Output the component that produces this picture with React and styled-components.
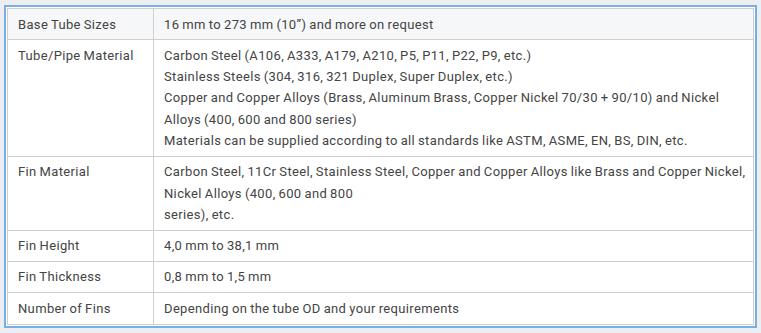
import styled, { createGlobalStyle } from "styled-components";

const rows = [
  {
    label: "Base Tube Sizes",
    lines: ["16 mm to 273 mm (10”) and more on request"],
    shaded: true,
  },
  {
    label: "Tube/Pipe Material",
    lines: [
      "Carbon Steel (A106, A333, A179, A210, P5, P11, P22, P9, etc.)",
      "Stainless Steels (304, 316, 321 Duplex, Super Duplex, etc.)",
      "Copper and Copper Alloys (Brass, Aluminum Brass, Copper Nickel 70/30 + 90/10) and Nickel",
      "Alloys (400, 600 and 800 series)",
      "Materials can be supplied according to all standards like ASTM, ASME, EN, BS, DIN, etc.",
    ],
  },
  {
    label: "Fin Material",
    lines: [
      "Carbon Steel, 11Cr Steel, Stainless Steel, Copper and Copper Alloys like Brass and Copper Nickel,",
      "Nickel Alloys (400, 600 and 800",
      "series), etc.",
    ],
  },
  { label: "Fin Height", lines: ["4,0 mm to 38,1 mm"] },
  { label: "Fin Thickness", lines: ["0,8 mm to 1,5 mm"] },
  {
    label: "Number of Fins",
    lines: ["Depending on the tube OD and your requirements"],
  },
];

export default function App() {
  return (
    <>
      <GlobalStyle />
      <Frame>
        <SpecTable>
          <colgroup>
            <col style={{ width: "146px" }} />
            <col />
          </colgroup>
          <tbody>
            {rows.map((row) => (
              <Row key={row.label} $shaded={row.shaded}>
                <Cell>{row.label}</Cell>
                <Cell>
                  {row.lines.map((line) => (
                    <Line key={line}>{line}</Line>
                  ))}
                </Cell>
              </Row>
            ))}
          </tbody>
        </SpecTable>
      </Frame>
    </>
  );
}

const GlobalStyle = createGlobalStyle`
  html, body {
    margin: 0;
    background: #eceef1;
  }
`;

const Frame = styled.div`
  margin: 5px 4px 6px;
  border: 2px solid #76aee6;
  padding: 1px;
  background: #ffffff;
`;

const SpecTable = styled.table`
  width: 100%;
  border-collapse: collapse;
  table-layout: fixed;
  border: 1px solid #cfcfcf;
  font-family: Roboto, "Liberation Sans", sans-serif;
  font-size: 13px;
  letter-spacing: 0.35px;
  word-spacing: -0.6px;
  color: #444444;
`;

const Row = styled.tr`
  background: ${(p) => (p.$shaded ? "#f6f7f8" : "#ffffff")};
`;

const Cell = styled.td`
  border: 1px solid #cfcfcf;
  padding: 4.5px 11px 4.5px 10px;
  line-height: 21.3px;
  vertical-align: top;
  white-space: nowrap;
`;

const Line = styled.div``;
